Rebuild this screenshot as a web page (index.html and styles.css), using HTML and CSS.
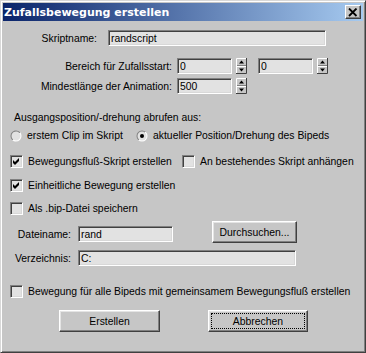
FILE: index.html
```html
<!DOCTYPE html>
<html>
<head>
  <meta charset="utf-8">
  <link rel="stylesheet" href="styles.css">
  <title>Zufallsbewegung erstellen</title>
</head>
<body>

  <div class="window">
    <div class="titlebar">
      <span class="title">Zufallsbewegung erstellen</span>
      <button class="close">
        <svg width="10" height="9" viewBox="0 0 10 9"><path d="M1 0.5L8.5 8M8.5 0.5L1 8" stroke="#000" stroke-width="1.8" fill="none"/></svg>
      </button>
    </div>

    <div class="content">
      <div class="row row-name">
        <label class="lbl lbl-name">Skriptname:</label>
        <input class="edit edit-long" type="text" value="randscript">
      </div>

      <div class="row row-range">
        <label class="lbl lbl-wide">Bereich für Zufallsstart:</label>
        <input class="edit edit-num" type="text" value="0">
        <svg class="spin" width="11" height="16" viewBox="0 0 11 16">
          <path d="M0 0H11V16H0Z" fill="#c6c6c6"/>
          <path d="M0.5 15.5V0.5H10.5" stroke="#fff" fill="none"/>
          <path d="M0 15.5H10.5V0" stroke="#404040" fill="none"/>
          <path d="M1 7.5H10" stroke="#808080"/>
          <path d="M1 8.5H10" stroke="#fff"/>
          <path d="M5.5 2.5L8 5.5H3Z" fill="#000"/>
          <path d="M3 10.5H8L5.5 13.5Z" fill="#000"/>
        </svg>
        <input class="edit edit-num second" type="text" value="0">
        <svg class="spin" width="11" height="16" viewBox="0 0 11 16">
          <path d="M0 0H11V16H0Z" fill="#c6c6c6"/>
          <path d="M0.5 15.5V0.5H10.5" stroke="#fff" fill="none"/>
          <path d="M0 15.5H10.5V0" stroke="#404040" fill="none"/>
          <path d="M1 7.5H10" stroke="#808080"/>
          <path d="M1 8.5H10" stroke="#fff"/>
          <path d="M5.5 2.5L8 5.5H3Z" fill="#000"/>
          <path d="M3 10.5H8L5.5 13.5Z" fill="#000"/>
        </svg>
      </div>

      <div class="row row-min">
        <label class="lbl lbl-wide">Mindestlänge der Animation:</label>
        <input class="edit edit-num" type="text" value="500">
        <svg class="spin" width="11" height="16" viewBox="0 0 11 16">
          <path d="M0 0H11V16H0Z" fill="#c6c6c6"/>
          <path d="M0.5 15.5V0.5H10.5" stroke="#fff" fill="none"/>
          <path d="M0 15.5H10.5V0" stroke="#404040" fill="none"/>
          <path d="M1 7.5H10" stroke="#808080"/>
          <path d="M1 8.5H10" stroke="#fff"/>
          <path d="M5.5 2.5L8 5.5H3Z" fill="#000"/>
          <path d="M3 10.5H8L5.5 13.5Z" fill="#000"/>
        </svg>
      </div>

      <div class="heading">Ausgangsposition/-drehung abrufen aus:</div>

      <div class="row row-radio">
        <div class="opt opt-first">
          <svg class="radio" width="12" height="12" viewBox="0 0 12 12">
            <defs>
              <linearGradient id="ring" x1="0" y1="0" x2="1" y2="1">
                <stop offset="0.5" stop-color="#808080"/>
                <stop offset="0.5" stop-color="#ffffff"/>
              </linearGradient>
            </defs>
            <circle cx="6" cy="6" r="5.5" fill="url(#ring)"/>
            <circle cx="6" cy="6" r="4.5" fill="#e2e2e2"/>
          </svg>
          <span>erstem Clip im Skript</span>
        </div>
        <div class="opt">
          <svg class="radio" width="12" height="12" viewBox="0 0 12 12">
            <circle cx="6" cy="6" r="5.5" fill="url(#ring)"/>
            <circle cx="6" cy="6" r="4.5" fill="#e2e2e2"/>
            <circle cx="6" cy="6" r="2" fill="#000"/>
          </svg>
          <span>aktueller Position/Drehung des Bipeds</span>
        </div>
      </div>

      <div class="row row-check1">
        <div class="opt opt-check-first">
          <span class="check"><svg width="9" height="9" viewBox="0 0 9 9"><path d="M1 3L3 5L7 1V4L3 8L1 6Z" fill="#000"/></svg></span>
          <span>Bewegungsfluß-Skript erstellen</span>
        </div>
        <div class="opt">
          <span class="check"></span>
          <span>An bestehendes Skript anhängen</span>
        </div>
      </div>

      <div class="row row-check2">
        <div class="opt">
          <span class="check"><svg width="9" height="9" viewBox="0 0 9 9"><path d="M1 3L3 5L7 1V4L3 8L1 6Z" fill="#000"/></svg></span>
          <span>Einheitliche Bewegung erstellen</span>
        </div>
      </div>

      <div class="row row-check3">
        <div class="opt">
          <span class="check"></span>
          <span>Als .bip-Datei speichern</span>
        </div>
      </div>

      <div class="row row-file">
        <label class="lbl lbl-file">Dateiname:</label>
        <input class="edit edit-file" type="text" value="rand">
        <button class="btn btn-browse">Durchsuchen...</button>
      </div>

      <div class="row row-dir">
        <label class="lbl lbl-dir">Verzeichnis:</label>
        <input class="edit edit-dir" type="text" value="C:">
      </div>

      <div class="row row-check4">
        <div class="opt">
          <span class="check"></span>
          <span>Bewegung für alle Bipeds mit gemeinsamem Bewegungsfluß erstellen</span>
        </div>
      </div>

      <div class="row row-buttons">
        <button class="btn btn-ok">Erstellen</button>
        <button class="btn btn-cancel"><span class="focus">Abbrechen</span></button>
      </div>
    </div>
  </div>

</body>
</html>
```

FILE: styles.css
```css
* {
  box-sizing: border-box;
}

body {
  margin: 0;
  background: #c6c6c6;
  font-family: 'Liberation Sans', Arial, sans-serif;
  font-size: 10.4px;
  color: #000;
}

.window {
  width: 366px;
  height: 353px;
  background: #c6c6c6;
  border: 1px solid;
  border-color: #d8d8d8 #404040 #404040 #d8d8d8;
  box-shadow: inset 1px 1px 0 #fff, inset -1px -1px 0 #808080;
  padding: 2px;
}

.titlebar {
  height: 18px;
  margin-bottom: 1px;
  background: linear-gradient(to right, #0a246a, #a6caf0);
  display: flex;
  align-items: center;
  justify-content: space-between;
  padding: 0 2px 0 1px;
}

.title {
  color: #fff;
  font-family: 'DejaVu Sans', Tahoma, sans-serif;
  font-weight: bold;
  font-size: 11px;
}

.close {
  width: 16px;
  height: 14px;
  padding: 0;
  background: #c6c6c6;
  border: 1px solid;
  border-color: #fff #404040 #404040 #fff;
  box-shadow: inset -1px -1px 0 #808080;
  display: flex;
  align-items: center;
  justify-content: center;
}

.row {
  display: flex;
  align-items: center;
  white-space: nowrap;
}

.lbl {
  text-align: right;
  line-height: 13px;
}

.edit {
  height: 16px;
  padding: 0 2px;
  border: 1px solid;
  border-color: #808080 #fff #fff #808080;
  box-shadow: inset 1px 1px 0 #404040, inset -1px -1px 0 #d8d8d8;
  background: #e2e2e2;
  font-family: inherit;
  font-size: 10.4px;
  color: #000;
  outline: none;
}

.spin {
  display: block;
  margin-left: 4px;
}

/* Skriptname */
.row-name {
  margin-top: 9px;
}

.lbl-name {
  width: 94px;
  margin-right: 11px;
}

.edit-long {
  width: 218px;
}

/* Zahlenfelder */
.row-range {
  margin-top: 12px;
}

.row-min {
  margin-top: 4px;
}

.lbl-wide {
  width: 169px;
  margin-right: 5px;
}

.edit-num {
  width: 55px;
}

.edit-num.second {
  margin-left: 11px;
}

.heading {
  margin-top: 17px;
  padding-left: 11px;
  line-height: 13px;
}

/* Optionen */
.opt {
  display: flex;
  align-items: center;
  line-height: 13px;
}

.opt-first {
  width: 126px;
}

.opt-check-first {
  width: 172px;
}

.row-radio {
  margin-top: 5px;
  padding-left: 7px;
}

.radio {
  display: block;
  margin-right: 5px;
}

.check {
  width: 13px;
  height: 13px;
  margin-right: 5px;
  border: 1px solid;
  border-color: #808080 #fff #fff #808080;
  box-shadow: inset 1px 1px 0 #404040, inset -1px -1px 0 #d8d8d8;
  background: #e2e2e2;
  display: flex;
  align-items: center;
  justify-content: center;
}

.check svg {
  display: block;
}

.row-check1,
.row-check2,
.row-check3,
.row-check4 {
  padding-left: 7px;
}

.row-check1 {
  margin-top: 13px;
}

.row-check2 {
  margin-top: 11px;
}

.row-check3 {
  margin-top: 10px;
}

.row-check4 {
  margin-top: 19px;
}

/* Datei */
.row-file {
  margin-top: 6px;
  height: 22px;
}

.lbl-file,
.lbl-dir {
  width: 68px;
  margin-right: 7px;
}

.lbl-file,
.edit-file {
  margin-top: 4px;
}

.edit-file {
  width: 95px;
  margin-right: 39px;
}

.row-dir {
  margin-top: 7px;
}

.edit-dir {
  width: 218px;
}

/* Buttons */
.btn {
  height: 22px;
  padding: 0;
  background: #c6c6c6;
  border: 1px solid;
  border-color: #fff #404040 #404040 #fff;
  box-shadow: inset -1px -1px 0 #808080, inset 1px 1px 0 #e4e4e4;
  font-family: inherit;
  font-size: 10.4px;
  color: #000;
}

.btn-browse {
  width: 85px;
}

.row-buttons {
  margin-top: 12px;
  padding-left: 56px;
}

.btn-ok {
  width: 101px;
  margin-right: 48px;
}

.btn-cancel {
  width: 100px;
  padding: 3px;
}

.focus {
  display: flex;
  align-items: center;
  justify-content: center;
  height: 100%;
  outline: 1px dotted #000;
}
```
